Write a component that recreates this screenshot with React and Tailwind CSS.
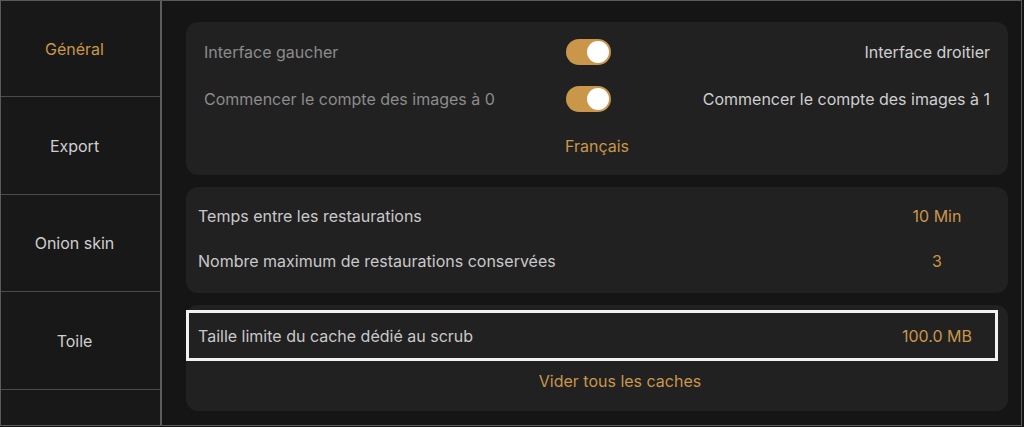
export default function App() {
  const font = { fontFamily: 'Inter, "Noto Sans", sans-serif' };
  const Toggle = () => (
    <div className="w-[45px] h-[26px] rounded-full bg-[#c9964a] flex items-center justify-end pr-[2px]">
      <div className="w-[22px] h-[22px] rounded-full bg-white" />
    </div>
  );
  const nav = [
    ["Général", "h-[96px]"],
    ["Export", "h-[98px]"],
    ["Onion skin", "h-[97px]"],
    ["Toile", "h-[98px]"],
  ];
  return (
    <div style={font} className="w-[1024px] h-[427px] bg-[#141414]">
      <div className="w-[1022px] h-[426px] border border-[#5a5a5a] flex bg-[#151515]">
        <div className="w-[161px] h-full bg-[#181818] border-r-2 border-[#5c5c5c] flex flex-col shrink-0">
          {nav.map(([n, h], i) => (
            <div
              key={n}
              className={`${h} shrink-0 flex items-center justify-center pr-[12px] border-b border-[#4a4a4a] text-[16px] ${i === 0 ? "text-[#c9964a]" : "text-[#cfcfcf]"}`}
            >
              {n}
            </div>
          ))}
        </div>
        <div className="flex-1 pl-[24px] pr-[13px] pt-[21px] flex flex-col gap-[12px]">
          <div className="h-[153px] rounded-[12px] bg-[#212121] pl-[18px] pr-[18px] pt-[17px] flex flex-col text-[16px]">
            <div className="h-[47px] grid grid-cols-[362px_45px_1fr] items-start">
              <div className="text-[#8c8c8c] leading-[26px]">Interface gaucher</div>
              <div><Toggle /></div>
              <div className="text-[#cfcfcf] text-right leading-[26px]">Interface droitier</div>
            </div>
            <div className="h-[47px] grid grid-cols-[362px_45px_1fr] items-start">
              <div className="text-[#8c8c8c] leading-[26px]">Commencer le compte des images à 0</div>
              <div><Toggle /></div>
              <div className="text-[#cfcfcf] text-right leading-[26px]">Commencer le compte des images à 1</div>
            </div>
            <div className="text-center text-[#c9964a] leading-[26px]">Français</div>
          </div>
          <div className="h-[106px] rounded-[12px] bg-[#212121] pl-[12px] pr-[21px] pt-[16px] flex flex-col text-[16px] text-[#c9c9c9]">
            <div className="h-[47px] flex items-start leading-[26px]">
              <div className="flex-1">Temps entre les restaurations</div>
              <div className="w-[100px] text-center text-[#c9964a]">10 Min</div>
            </div>
            <div className="h-[47px] flex items-start leading-[26px]">
              <div className="flex-1">Nombre maximum de restaurations conservées</div>
              <div className="w-[100px] text-center text-[#c9964a]">3</div>
            </div>
          </div>
          <div className="h-[106px] rounded-[12px] bg-[#212121] pt-[5px] flex flex-col text-[16px] text-[#c9c9c9]">
            <div className="h-[51px] mr-[10px] border-[3px] border-[#f2f2f2] flex items-center pl-[9px] pr-[8px]">
              <div className="flex-1">Taille limite du cache dédié au scrub</div>
              <div className="w-[100px] text-center text-[#c9964a]">100.0 MB</div>
            </div>
            <div className="h-[40px] flex items-center justify-center text-[#c9964a] pl-[46px]">Vider tous les caches</div>
          </div>
        </div>
      </div>
    </div>
  );
}
